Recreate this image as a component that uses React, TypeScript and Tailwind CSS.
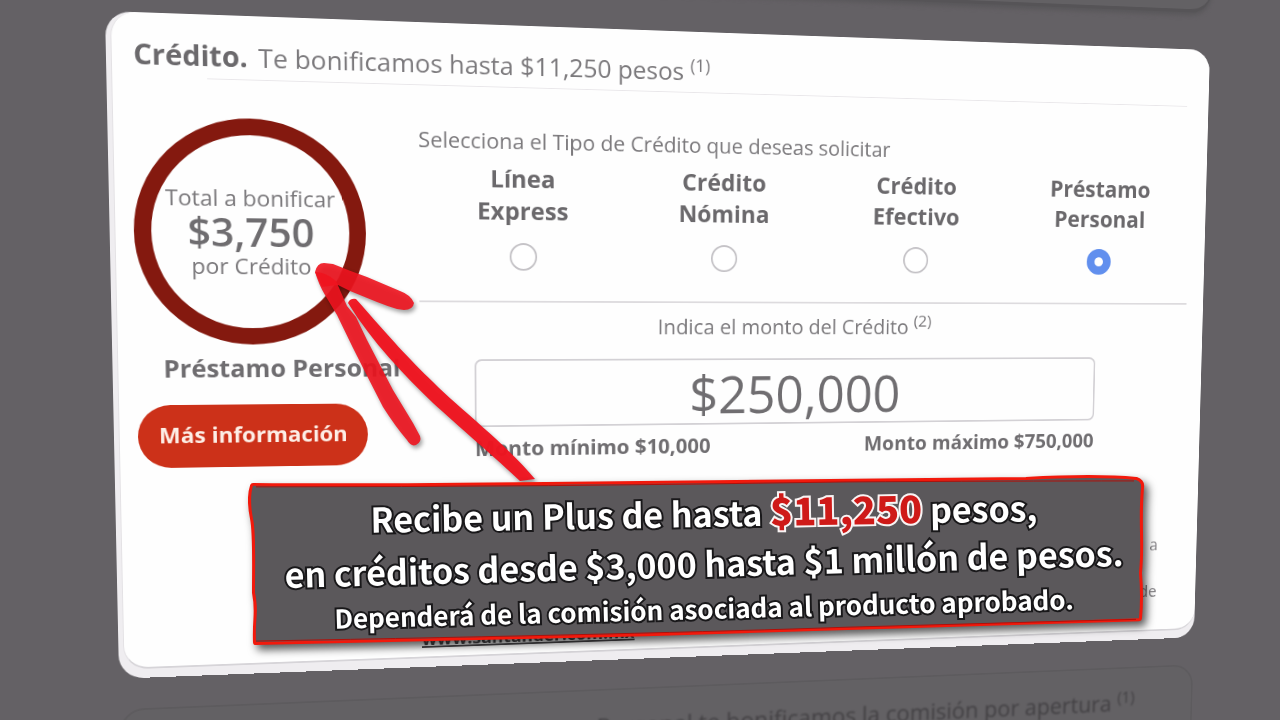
import { useState } from "react";

const creditTypes = [
  { id: "linea-express", first: "Línea", second: "Express" },
  { id: "credito-nomina", first: "Crédito", second: "Nómina" },
  { id: "credito-efectivo", first: "Crédito", second: "Efectivo" },
  { id: "prestamo-personal", first: "Préstamo", second: "Personal" },
];

function CreditTypePicker() {
  const [selected, setSelected] = useState("prestamo-personal");
  return (
    <fieldset>
      <legend className="text-[24px] leading-9 text-[#7b797c]">
        Selecciona el Tipo de Crédito que deseas solicitar
      </legend>
      <div className="mt-[6px] grid grid-cols-4">
        {creditTypes.map((type) => (
          <label
            key={type.id}
            className="flex flex-col items-center text-center text-[27px] leading-9 font-bold text-[#6b696c]"
          >
            <span>{type.first}</span>
            <span>{type.second}</span>
            <input
              type="radio"
              name="credit-type"
              checked={selected === type.id}
              onChange={() => setSelected(type.id)}
              className="mt-[18px] size-[31px] appearance-none rounded-full border-2 border-[#c3c1c5] bg-white checked:border-[10px] checked:border-[#618fee]"
            />
          </label>
        ))}
      </div>
    </fieldset>
  );
}

function AmountForm() {
  const [amount, setAmount] = useState("$250,000");
  return (
    <div className="mt-2 mr-[118px] ml-[61px]">
      <label
        htmlFor="amount"
        className="block text-center text-[24px] leading-[38px] text-[#7b797c]"
      >
        Indica el monto del Crédito <sup className="text-[19px]">(2)</sup>
      </label>
      <input
        id="amount"
        type="text"
        value={amount}
        onChange={(event) => setAmount(event.target.value)}
        className="mt-[18px] block h-[77px] w-full rounded-lg border-2 border-[#d3d1d5] bg-transparent pt-1 text-center text-[60px] text-[#706e71]"
      />
      <div className="mt-[6px] flex justify-between text-[24px] leading-9 font-bold text-[#706e71]">
        <span>Monto mínimo $10,000</span>
        <span>Monto máximo $750,000</span>
      </div>
    </div>
  );
}

function CreditCard() {
  return (
    <section className="rounded-[26px] bg-[#efedf0] pb-[10px] pl-[5px]">
      <div className="rounded-[26px] border-b-2 border-l border-[#d6d4d8] border-l-[#e4e2e5] bg-[#fefefe] pb-[6px]">
        <h1 className="pt-6 pl-[22px] text-[28px] leading-10 text-[#7b797c]">
          <strong className="mr-1 text-[30px] font-bold text-[#6b696c]">Crédito.</strong> Te
          bonificamos hasta $11,250 pesos <sup className="text-[20px]">(1)</sup>
        </h1>
        <hr className="mt-1 mr-7 ml-[98px] border-[#e9e7ea]" />
        <div className="mt-[41px] grid grid-cols-[246px_1fr] gap-[58px] pr-[22px] pl-[19px]">
          <div>
            <div className="flex size-[246px] flex-col items-center justify-center rounded-full border-[18px] border-[#84190f] text-[24px] leading-[30px] whitespace-nowrap text-[#7b797c]">
              <span>Total a bonificar</span>
              <span className="text-[43px] leading-[44px] font-semibold text-[#6f6d70]">$3,750</span>
              <span>por Crédito</span>
            </div>
            <p className="mt-2 text-center text-[27px] leading-9 font-bold whitespace-nowrap text-[#6f6d70]">
              <span className="ml-7">Préstamo Personal</span>
            </p>
            <button
              type="button"
              className="mt-[22px] h-[69px] w-full rounded-full bg-[#cc3119] pb-1 text-[24px] font-bold text-[#fdeee6]"
            >
              Más información
            </button>
          </div>
          <div>
            <CreditTypePicker />
            <hr className="mt-[34px] border-t-2 border-[#dddbde]" />
            <AmountForm />
            <div className="mt-[99px] pr-[30px] text-[20px] leading-7 text-[#88868a]">
              <p className="text-right">a</p>
              <p className="mt-[30px] text-right">de</p>
              <a href="#" className="block font-bold text-[#4b494c] underline">
                www.santander.com.mx
              </a>
            </div>
          </div>
        </div>
      </div>
    </section>
  );
}

function Arrow() {
  return (
    <svg
      viewBox="310 255 240 230"
      className="absolute top-[255px] left-[310px] h-[230px] w-[240px] drop-shadow-[2px_3px_2px_rgba(0,0,0,0.4)]"
      fill="#f0141f"
      aria-hidden="true"
    >
      <path
        opacity=".96"
        d="M348 303 Q350 298 356 299 C390 338 410 360 433 382 C460 409 505 443 535 479 L520 481 C500 462 455 423 433 403 C405 376 372 342 348 303Z"
      />
      <path
        opacity=".9"
        d="M315 272 Q317 263 324 263 L333 264 Q350 271 367 277 L400 291 Q411 295 414 303 Q413 310 404 310 L397 309 Q387 306 377 302 L350 291 L338 285 L322 287Z"
      />
      <path
        opacity=".9"
        d="M315 272 Q319 285 325 295 L337 315 L353 348 Q368 378 383 407 Q395 426 407 440 Q411 447 416 445 Q422 442 420 436 L413 423 L393 390 L367 340 L356 317 L347 306 L336 281 Q326 272 315 272Z"
      />
    </svg>
  );
}

function PlusBanner() {
  return (
    <aside className="absolute top-[474px] left-[246px] w-[902px] pt-3 pb-5 pl-[14px] text-center font-['Noto_Sans_CJK_SC',sans-serif] font-bold whitespace-nowrap text-white [-webkit-text-stroke:4px_#19181a] [paint-order:stroke_fill]">
      <svg
        viewBox="0 0 902 176"
        preserveAspectRatio="none"
        className="absolute inset-0 h-full w-full overflow-visible drop-shadow-[4px_5px_4px_rgba(0,0,0,0.65)]"
        aria-hidden="true"
      >
        <path
          d="M7 12 Q120 13 300 11 Q600 8 780 6 Q850 2 890 6 Q896 8 895 14 C892 50 896 70 893 100 Q895 125 893 146 Q600 156 400 161 Q200 166 10 170 C9 145 13 140 9 120 C9 90 10 60 7 45 C4 30 5 18 7 12Z"
          fill="#5b585b"
          stroke="#f2190c"
          strokeWidth="6"
          strokeLinejoin="round"
        />
        <path
          d="M10 13 Q300 13 600 8 Q760 7 888 7 M10 169 Q400 162 600 155 L890 147"
          fill="none"
          stroke="#b00f09"
          strokeWidth="1"
        />
      </svg>
      <p className="relative -rotate-1 text-[34px] leading-[50px]">
        Recibe un Plus de hasta{" "}
        <strong className="text-[38px] text-[#cf1a18] [-webkit-text-stroke:4px_#f8f4f4]">
          $11,250
        </strong>{" "}
        pesos,
      </p>
      <p className="relative rotate-[-1.5deg] text-[34px] leading-[50px]">
        en créditos desde $3,000 hasta $1 millón de pesos.
      </p>
      <p className="relative rotate-[-1.5deg] text-[26px] leading-10">
        Dependerá de la comisión asociada al producto aprobado.
      </p>
    </aside>
  );
}

export default function App() {
  return (
    <main className="relative h-screen overflow-hidden bg-[#646165] font-['Open_Sans',sans-serif]">
      <div className="-mt-[144px] flex origin-[0_144px] flex-col [transform:matrix3d(0.99453,0.035891,0,0.00010848,0.024403,0.95175,0,0.000041625,0,0,1,0,105,11,0,1)]">
        <div className="mb-[44px] h-[100px] rounded-[26px] border-r border-b-4 border-[#565457] bg-[#636164] shadow-[0_3px_6px_#575558]" />
        <CreditCard />
        <section className="mt-[34px] h-[160px] rounded-[26px] border-2 border-[#5d5b5e] bg-[#636164] pt-[22px] pl-[527px]">
          <h2 className="text-[28px] leading-10 whitespace-nowrap text-[#434144] blur-[1px]">
            Personal te bonificamos la comisión por apertura{" "}
            <sup className="text-[20px]">(1)</sup>
          </h2>
        </section>
      </div>
      <Arrow />
      <PlusBanner />
    </main>
  );
}
